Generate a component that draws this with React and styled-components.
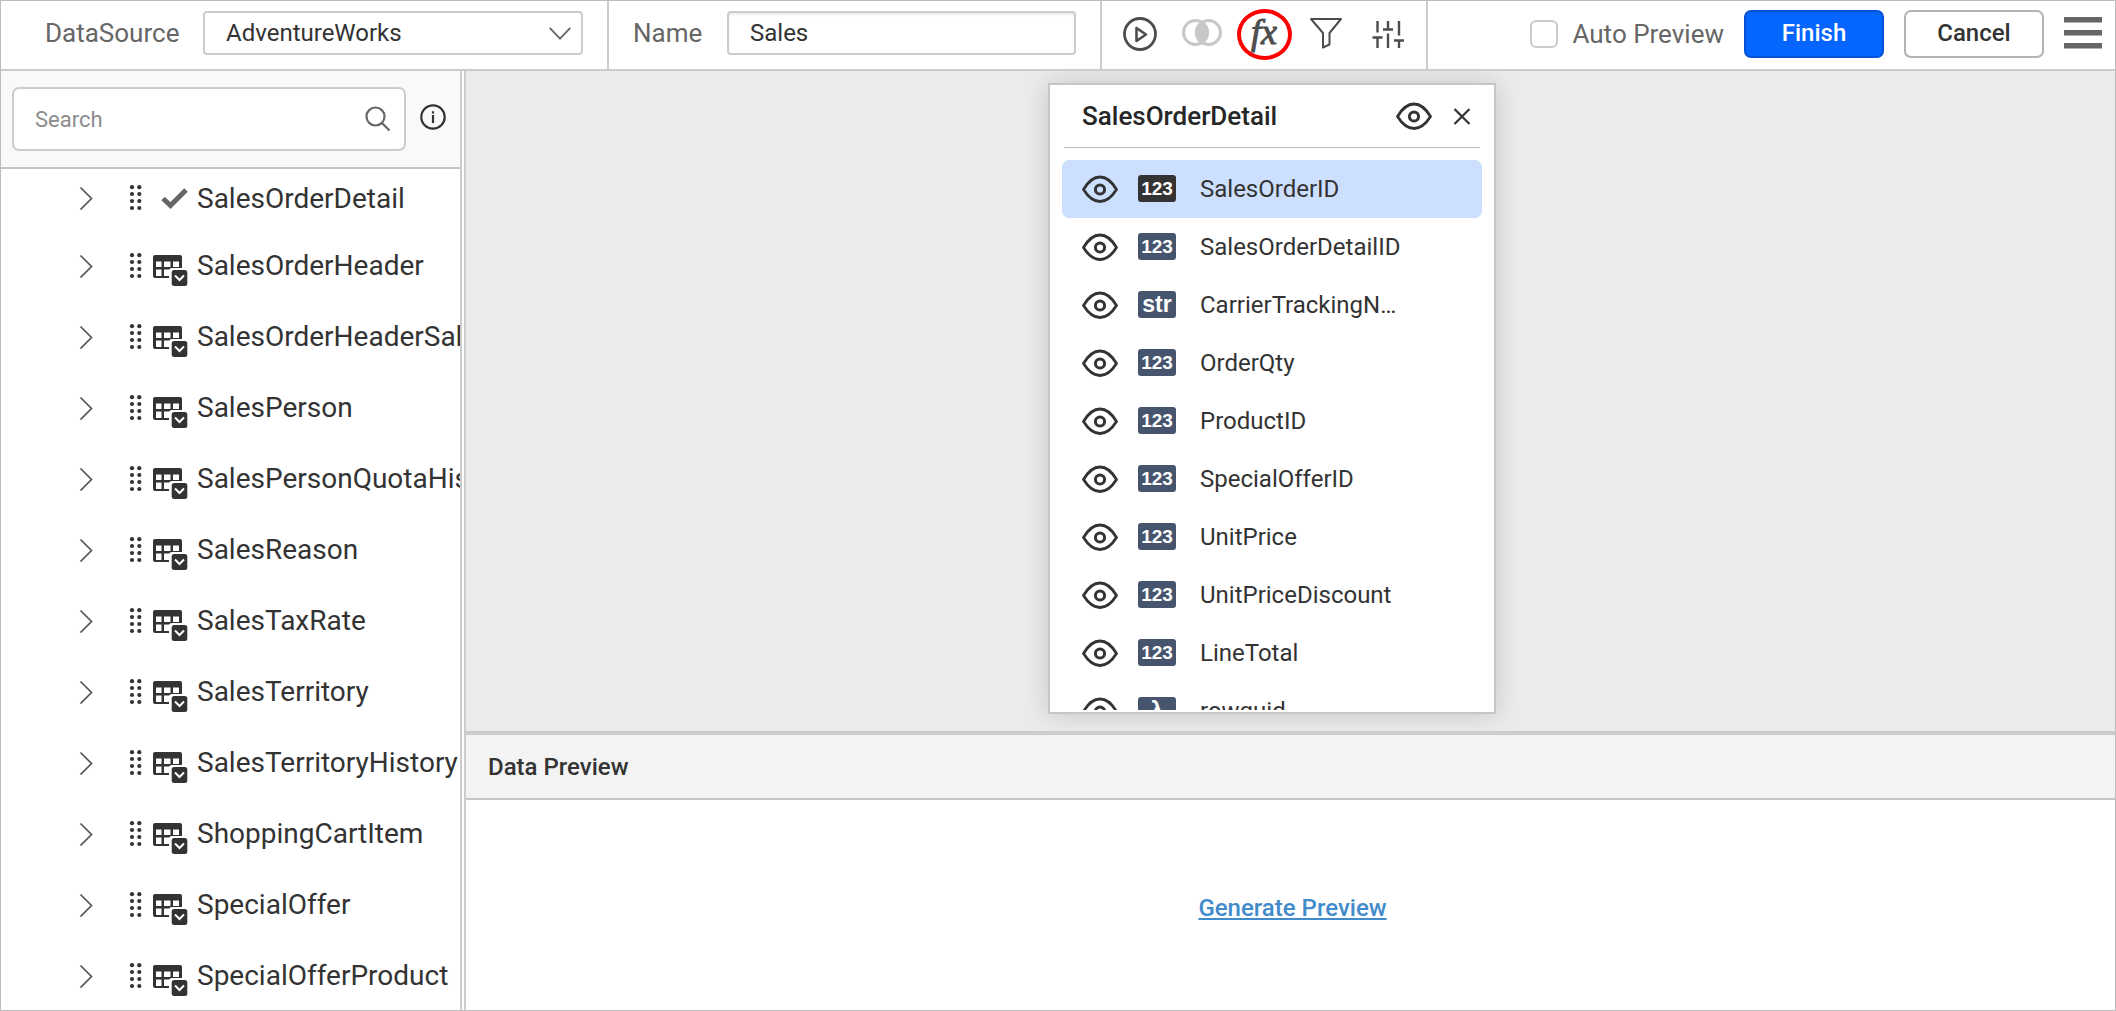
import React from "react";
import styled, { createGlobalStyle, css } from "styled-components";

const GlobalStyle = createGlobalStyle`
  *, *::before, *::after { box-sizing: border-box; }
  body { margin: 0; }
  body, button, input, select {
    font-family: Roboto, "Liberation Sans", sans-serif;
    color: #333;
  }
`;

const Page = styled.div`
  display: flex;
  flex-direction: column;
  height: 100vh;
  border: 1px solid #bcbcbc;
  background: #fff;
`;

/* ---------- Top bar ---------- */

const Toolbar = styled.header`
  display: flex;
  flex: none;
  height: 70px;
  border-bottom: 2px solid #ccc;
`;

const Group = styled.div`
  display: flex;
  align-items: center;
  padding: 0 24px 4px ${(p) => (p.$first ? "44px" : "24px")};
  border-right: 2px solid #ccc;
`;

const FieldLabel = styled.label`
  width: ${(p) => p.$width};
  font-size: 26px;
  line-height: 32px;
  color: #666;
`;

const control = css`
  height: 44px;
  padding: 0 21px;
  font-size: 24px;
  background: #fff;
  border: 2px solid #ccc;
  border-radius: 4px;
`;

const SelectBox = styled.div`
  display: grid;
  align-items: center;
  width: 380px;

  & > * { grid-area: 1 / 1; }
  & > svg {
    justify-self: end;
    margin-right: 12px;
    pointer-events: none;
  }
`;

const Select = styled.select`
  ${control}
  width: 100%;
  appearance: none;
`;

const NameInput = styled.input`
  ${control}
  width: 349px;
  box-shadow: inset 0 2px 2px rgba(0, 0, 0, 0.08);
`;

const Tools = styled.div`
  display: flex;
  align-items: center;
  padding: 0 7px 2px;
  border-right: 2px solid #ccc;
`;

const iconButton = css`
  display: flex;
  align-items: center;
  justify-content: center;
  padding: 0;
  border: 0;
  background: none;
  cursor: pointer;
`;

const ToolButton = styled.button`
  ${iconButton}
  width: 62px;
  height: 64px;
`;

const FunctionRing = styled.span`
  display: flex;
  align-items: center;
  justify-content: center;
  width: 55px;
  height: 51px;
  padding-bottom: 4px;
  border: 4px solid #f00;
  border-radius: 50%;
  font: italic 400 36px/36px "Liberation Serif", serif;
  color: #4d4d4d;
  -webkit-text-stroke: 1px #4d4d4d;
`;

const Actions = styled.div`
  display: flex;
  align-items: center;
  gap: 20px;
  margin-left: auto;
  padding: 0 13px 2px 0;
`;

const CheckLabel = styled.label`
  display: flex;
  align-items: center;
  gap: 14px;
  font-size: 26px;
  color: #666;
`;

const Checkbox = styled.input`
  appearance: none;
  width: 28px;
  height: 28px;
  margin: 0;
  background: #fff;
  border: 2px solid #ccc;
  border-radius: 6px;

  &:checked { background: #0565ff; }
`;

const Button = styled.button`
  width: 140px;
  height: 48px;
  padding: 0 0 2px;
  font-size: 24px;
  font-weight: 500;
  color: ${(p) => (p.$primary ? "#fff" : "#333")};
  background: ${(p) => (p.$primary ? "#0565ff" : "#fff")};
  border: 2px solid ${(p) => (p.$primary ? "#0352d6" : "#b3b3b3")};
  border-radius: 7px;
`;

const IconButton = styled.button`
  ${iconButton}
`;

/* ---------- Sidebar ---------- */

const Body = styled.div`
  display: flex;
  flex: 1;
  min-height: 0;
  gap: 2px;
`;

const Sidebar = styled.aside`
  display: flex;
  flex-direction: column;
  flex: none;
  width: 461px;
  border-right: 2px solid #ccc;
`;

const SearchBar = styled.div`
  display: flex;
  align-items: center;
  gap: 14px;
  padding: 16px 14px 16px 11px;
  background: #f9f9f9;
  border-bottom: 2px solid #c4c4c4;
`;

const SearchField = styled.label`
  display: flex;
  flex: 1;
  align-items: center;
  height: 64px;
  padding: 0 13px 0 21px;
  background: #fff;
  border: 2px solid #ccc;
  border-radius: 7px;
`;

const SearchInput = styled.input`
  flex: 1;
  min-width: 0;
  padding: 0;
  border: 0;
  outline: 0;
  font-size: 22px;
  &::placeholder { color: #8c8c8c; }
`;

const InfoButton = styled.button`
  ${iconButton}
  padding-bottom: 4px;
`;

const Tree = styled.ul`
  flex: 1;
  margin: 0;
  padding: 0;
  overflow: hidden;
  list-style: none;
`;

const TreeRow = styled.li`
  display: grid;
  grid-template-columns: 49px 24px 45px 1fr;
  align-items: center;
  height: 71px;
  padding-left: 78px;
  font-size: 28px;
  white-space: nowrap;

  &:first-child {
    height: 58px;
    margin-bottom: 3px;
  }
`;

const ExpandButton = styled.button`
  ${iconButton}
  justify-content: flex-start;
`;

/* ---------- Workspace ---------- */

const Workspace = styled.main`
  display: flex;
  flex-direction: column;
  flex: 1;
  min-width: 0;
  border-left: 2px solid #ccc;
`;

const Canvas = styled.section`
  position: relative;
  flex: 1;
  overflow: hidden;
  background: #ebebeb;
`;

const TableCard = styled.article`
  position: absolute;
  top: 12px;
  left: 582px;
  width: 448px;
  padding-bottom: 2px;
  background: #fff;
  border: 2px solid #c6c6c6;
  box-shadow: 0 0 24px rgba(0, 0, 0, 0.16);
`;

const CardHeader = styled.header`
  display: flex;
  align-items: center;
  gap: 20px;
  height: 63px;
  margin: 0 14px 12px;
  padding: 0 8px 0 18px;
  border-bottom: 1px solid #bbb;
`;

const CardTitle = styled.h2`
  flex: 1;
  margin: 0;
  font-size: 26px;
  font-weight: 500;
  line-height: 32px;
  color: #262626;
`;

const ColumnList = styled.ul`
  height: 550px;
  margin: 0 12px;
  padding: 0;
  overflow: hidden;
  list-style: none;
`;

const ColumnRow = styled.li`
  display: flex;
  align-items: center;
  height: 58px;
  padding: 0 20px;
  border-radius: 7px;
  background: ${(p) => (p.$selected ? "#cddfff" : "transparent")};
`;

const TypeBadge = styled.span`
  flex: none;
  width: 38px;
  height: 27px;
  margin: 0 24px 2px 20px;
  border-radius: 3px;
  background: ${(p) => (p.$selected ? "#333" : "#46546e")};
  color: #fff;
  font-family: "Liberation Sans", Arial, sans-serif;
  font-size: ${(p) => (p.$numeric ? "19px" : "23px")};
  font-weight: 700;
  line-height: 27px;
  text-align: center;
`;

const ColumnName = styled.span`
  width: 204px;
  overflow: hidden;
  font-size: 24px;
  line-height: 32px;
  white-space: nowrap;
  text-overflow: ellipsis;
`;

const Preview = styled.section`
  flex: none;
  border-top: 4px solid #ccc;
`;

const PreviewTitle = styled.h2`
  margin: 0;
  padding: 16px 22px 15px;
  font-size: 24px;
  font-weight: 500;
  line-height: 32px;
  background: #f3f3f3;
  border-bottom: 2px solid #c6c6c6;
`;

const PreviewBody = styled.div`
  display: flex;
  align-items: center;
  justify-content: center;
  height: 210px;
  padding: 6px 0 0 4px;
`;

const PreviewLink = styled.a`
  font-size: 24px;
  font-weight: 500;
  color: #428bca;
  text-decoration: underline;
  text-decoration-thickness: 2px;
  text-underline-offset: 2px;
  text-decoration-skip-ink: none;
`;

/* ---------- Icons ---------- */

const ChevronDown = () => (
  <svg width="22" height="13" viewBox="0 0 22 13" fill="none" stroke="#666" strokeWidth="1.8">
    <path d="M.7 .8 11 11.6 21.3 .8" />
  </svg>
);

const PlayIcon = () => (
  <svg width="34" height="34" viewBox="0 0 34 34" fill="none" stroke="#4d4d4d">
    <circle cx="17" cy="17" r="15.5" strokeWidth="2.8" />
    <path d="M13.5 11v13l9.500-6.500z" strokeWidth="2.6" strokeLinejoin="round" />
  </svg>
);

const JoinIcon = () => (
  <svg width="40" height="34" viewBox="0 0 40 34" fill="none" stroke="#c8c8c8" strokeWidth="3">
    <circle cx="13.5" cy="15.500" r="12" />
    <circle cx="26.5" cy="15.500" r="12" />
    <path d="M20 5.400a12 12 0 0 1 0 20.200a12 12 0 0 1 0-20.200z" fill="#c8c8c8" />
  </svg>
);

const FilterIcon = () => (
  <svg width="34" height="34" viewBox="0 0 34 34" fill="none" stroke="#4d4d4d" strokeWidth="2">
    <path d="M2 2h30L20.500 16v11.500l-6.500 3V16z" strokeLinejoin="round" />
  </svg>
);

const SlidersIcon = () => (
  <svg width="34" height="34" viewBox="0 0 34 34" fill="none" stroke="#4d4d4d" strokeWidth="2.400">
    <path d="M6.500 4v11.500M1.500 20.500h10M6.500 20.500v10.500M17 4v8M12 12.500h10M17 16.500v14.500M28 4v14.500M23 23.500h10M28 23.500V31" />
  </svg>
);

const MenuIcon = () => (
  <svg width="38" height="34" viewBox="0 0 38 34" fill="#666">
    <path d="M0 0h38v5.500H0zM0 13h38v5.500H0zM0 26h38v5.500H0z" />
  </svg>
);

const SearchIcon = () => (
  <svg width="26" height="26" viewBox="0 0 26 26" fill="none" stroke="#666" strokeWidth="2.200">
    <circle cx="10.500" cy="10.500" r="9" />
    <path d="M17 17l7.500 7.500" />
  </svg>
);

const InfoIcon = () => (
  <svg width="26" height="26" viewBox="0 0 26 26" fill="none" stroke="#333" strokeWidth="2.200">
    <circle cx="13" cy="13" r="11.700" />
    <path d="M13 11v8M13 7.200v2.400" />
  </svg>
);

const ChevronRight = () => (
  <svg width="14" height="24" viewBox="0 0 14 24" fill="none" stroke="#555" strokeWidth="1.700">
    <path d="M1.500 1.500 12.500 12.500 1.500 23.500" />
  </svg>
);

const DragDots = () => (
  <svg width="14" height="26" viewBox="0 0 14 26" fill="#333">
    {[2.2, 9, 16, 23].map((y) => (
      <React.Fragment key={y}>
        <circle cx="4" cy={y} r="2.100" />
        <circle cx="11.300" cy={y} r="2.100" />
      </React.Fragment>
    ))}
  </svg>
);

const CheckIcon = () => (
  <svg width="37" height="28" viewBox="0 0 37 28" fill="none" stroke="#666" strokeWidth="5">
    <path d="M11 14.500 18.500 21.500 34 6" />
  </svg>
);

const TableIcon = () => (
  <svg width="37" height="42" viewBox="-1 0 37 42">
    <path
      fill="#333"
      fillRule="evenodd"
      d="M2 10h25a2 2 0 0 1 2 2v21H2a2 2 0 0 1-2-2V12a2 2 0 0 1 2-2zM3 16.500v5.500h5.500v-5.500zM11 16.500v5.500h6.500v-5.500zM20 16.500v5.500h6v-5.500zM3 24.500V31h5.500v-6.500zM11 24.500V31h6.500v-6.500z"
    />
    <path fill="#fff" d="M16 34V26q0-3 3-3h17v19H16z" />
    <rect x="18.700" y="25" width="15.600" height="16" rx="2.500" fill="#333" />
    <path d="M22 30.500l4.500 4.500 4.500-4.500" fill="none" stroke="#fff" strokeWidth="2" />
  </svg>
);

const EyeIcon = () => (
  <svg width="36" height="28" viewBox="0 0 36 28" fill="none" stroke="#333" strokeWidth="2.800">
    <path
      d="M1.500 14.500C6.500 6 12 2 18 2s11.500 4 16.500 12.500C29.500 22.500 24 26.500 18 26.500S6.500 22.500 1.500 14.500z"
      strokeLinejoin="round"
    />
    <circle cx="18" cy="14.500" r="4.600" strokeWidth="3" />
  </svg>
);

const CloseIcon = () => (
  <svg width="20" height="20" viewBox="0 0 20 20" fill="none" stroke="#333" strokeWidth="2.200">
    <path d="M2.500 3l15 15M17.500 3l-15 15" />
  </svg>
);

/* ---------- Data ---------- */

const tables = [
  "SalesOrderDetail",
  "SalesOrderHeader",
  "SalesOrderHeaderSalesReason",
  "SalesPerson",
  "SalesPersonQuotaHistory",
  "SalesReason",
  "SalesTaxRate",
  "SalesTerritory",
  "SalesTerritoryHistory",
  "ShoppingCartItem",
  "SpecialOffer",
  "SpecialOfferProduct",
];

const columns = [
  ["SalesOrderID", "123"],
  ["SalesOrderDetailID", "123"],
  ["CarrierTrackingNumber", "str"],
  ["OrderQty", "123"],
  ["ProductID", "123"],
  ["SpecialOfferID", "123"],
  ["UnitPrice", "123"],
  ["UnitPriceDiscount", "123"],
  ["LineTotal", "123"],
  ["rowguid", "λ"],
];

export default function App() {
  const [selected, setSelected] = React.useState("SalesOrderID");

  return (
    <Page>
      <GlobalStyle />
      <Toolbar>
        <Group $first>
          <FieldLabel htmlFor="datasource" $width="158px">DataSource</FieldLabel>
          <SelectBox>
            <Select id="datasource">
              <option>AdventureWorks</option>
            </Select>
            <ChevronDown />
          </SelectBox>
        </Group>
        <Group>
          <FieldLabel htmlFor="name" $width="94px">Name</FieldLabel>
          <NameInput id="name" defaultValue="Sales" />
        </Group>
        <Tools>
          <ToolButton aria-label="Run"><PlayIcon /></ToolButton>
          <ToolButton aria-label="Join"><JoinIcon /></ToolButton>
          <ToolButton aria-label="Expression"><FunctionRing>fx</FunctionRing></ToolButton>
          <ToolButton aria-label="Filter"><FilterIcon /></ToolButton>
          <ToolButton aria-label="Parameters"><SlidersIcon /></ToolButton>
        </Tools>
        <Actions>
          <CheckLabel>
            <Checkbox type="checkbox" />
            Auto Preview
          </CheckLabel>
          <Button $primary>Finish</Button>
          <Button>Cancel</Button>
          <IconButton aria-label="Menu"><MenuIcon /></IconButton>
        </Actions>
      </Toolbar>

      <Body>
        <Sidebar>
          <SearchBar>
            <SearchField>
              <SearchInput type="text" placeholder="Search" aria-label="Search" />
              <SearchIcon />
            </SearchField>
            <InfoButton aria-label="Information"><InfoIcon /></InfoButton>
          </SearchBar>
          <Tree>
            {tables.map((name, index) => (
              <TreeRow key={name}>
                <ExpandButton aria-label={`Expand ${name}`}><ChevronRight /></ExpandButton>
                <DragDots />
                {index === 0 ? <CheckIcon /> : <TableIcon />}
                <span>{name}</span>
              </TreeRow>
            ))}
          </Tree>
        </Sidebar>

        <Workspace>
          <Canvas>
            <TableCard>
              <CardHeader>
                <CardTitle>SalesOrderDetail</CardTitle>
                <IconButton aria-label="Toggle all columns"><EyeIcon /></IconButton>
                <IconButton aria-label="Close"><CloseIcon /></IconButton>
              </CardHeader>
              <ColumnList>
                {columns.map(([name, type]) => (
                  <ColumnRow
                    key={name}
                    $selected={name === selected}
                    onClick={() => setSelected(name)}
                  >
                    <IconButton aria-label={`Toggle ${name}`}><EyeIcon /></IconButton>
                    <TypeBadge $selected={name === selected} $numeric={type === "123"}>
                      {type}
                    </TypeBadge>
                    <ColumnName>{name}</ColumnName>
                  </ColumnRow>
                ))}
              </ColumnList>
            </TableCard>
          </Canvas>
          <Preview>
            <PreviewTitle>Data Preview</PreviewTitle>
            <PreviewBody>
              <PreviewLink href="#preview">Generate Preview</PreviewLink>
            </PreviewBody>
          </Preview>
        </Workspace>
      </Body>
    </Page>
  );
}
